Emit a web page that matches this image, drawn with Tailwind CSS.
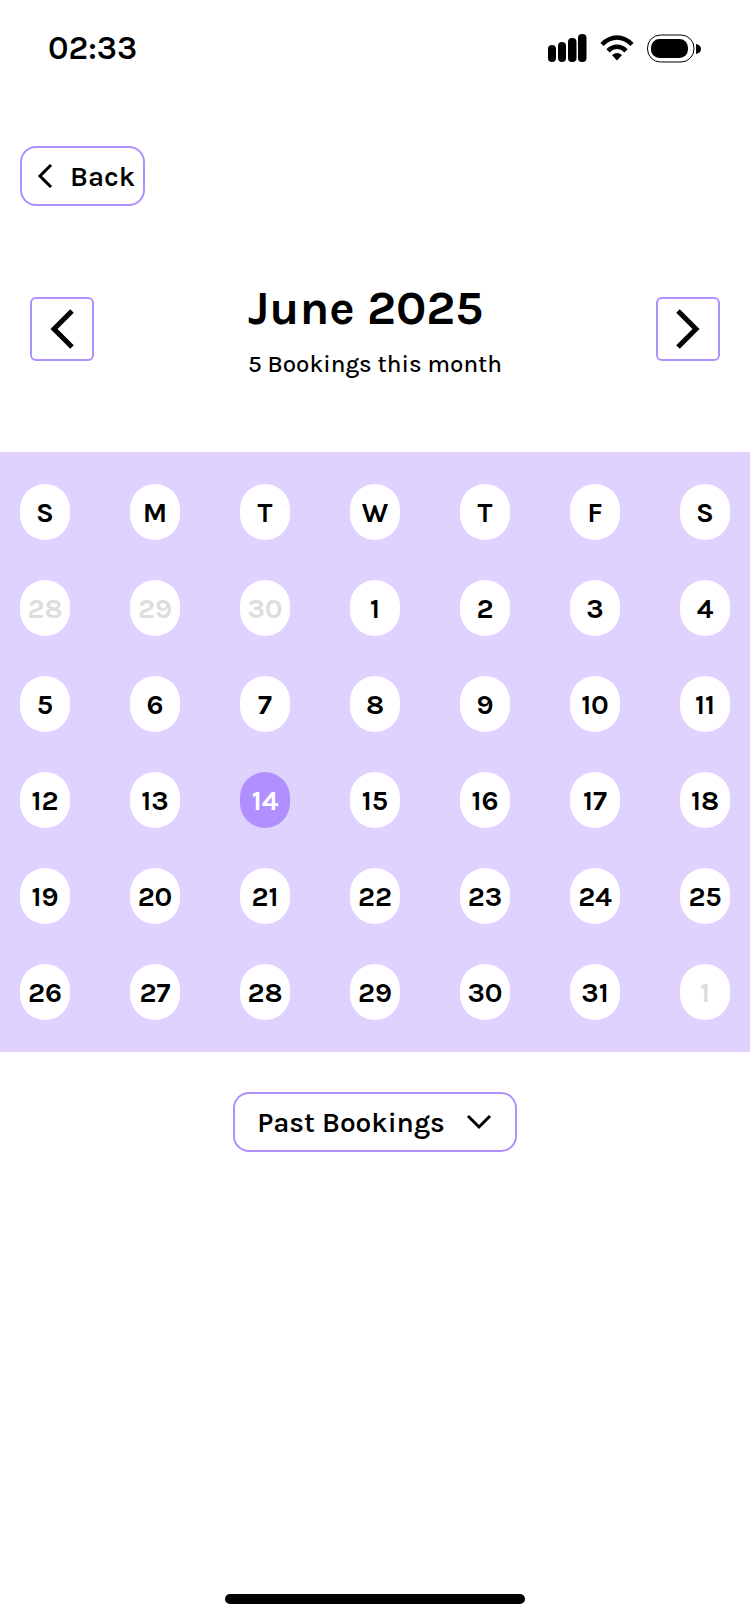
<!DOCTYPE html>
<html lang="en">
<head>
<meta charset="utf-8">
<meta name="viewport" content="width=device-width, initial-scale=1">
<title>Bookings calendar</title>
<script src="https://cdn.jsdelivr.net/npm/@tailwindcss/browser@4"></script>
</head>
<body class="flex min-h-screen flex-col bg-white font-['Karla','Inter',sans-serif] text-black">
  <div class="flex h-24 items-center justify-between pl-12 pr-12">
    <time class="text-[33px] leading-9 font-semibold">02:33</time>
    <svg class="h-8 w-[156px]" viewBox="546 32 156 32" role="img" aria-label="Signal, Wi-Fi and battery">
      <rect x="548" y="45" width="8" height="17" rx="4"/>
      <rect x="558" y="42" width="8" height="20" rx="4"/>
      <rect x="568" y="38" width="8.500" height="24" rx="4"/>
      <rect x="578" y="34" width="8.500" height="28" rx="4"/>
      <g fill="none" stroke="#000" stroke-width="4.500">
        <path d="M602 44.500Q609 37.500 617 37.500T632 44.500"/>
        <path d="M608 50.800Q612 46.800 617 46.800T626 50.800"/>
      </g>
      <path d="M612 55Q617 51 622 55L618 59.500Q617 61 616 59.500Z"/>
      <rect x="647.500" y="35" width="46.500" height="27" rx="13" fill="none" stroke="#000"/>
      <rect x="651" y="39" width="37" height="19" rx="8.500"/>
      <path d="M696 44Q701 45 701 49T696 54Z"/>
    </svg>
  </div>

  <nav class="mt-[50px] px-5">
    <button type="button" class="flex h-[60px] items-center gap-3 rounded-2xl border-2 border-[#b08fff] pl-3 pr-2 text-[28px] font-semibold">
      <svg class="size-6" viewBox="0 0 24 24" fill="none" stroke="currentColor" stroke-width="3" aria-hidden="true"><path d="M17 1L6 12L17 23"/></svg>
      <span class="pt-0.5">Back</span>
    </button>
  </nav>

  <header class="mt-[73px] flex items-center justify-between px-[30px]">
    <button type="button" aria-label="Previous month" class="flex size-16 items-center justify-center rounded-md border-2 border-[#b08fff]">
      <svg class="size-10" viewBox="0 0 40 40" fill="none" stroke="currentColor" stroke-width="5" aria-hidden="true"><path d="M30 2L12 20L30 38"/></svg>
    </button>
    <div>
      <h1 class="text-[48px] leading-[58px] font-bold">June 2025</h1>
      <p class="mt-3 text-[24px] leading-[30px] font-medium">5 Bookings this month</p>
    </div>
    <button type="button" aria-label="Next month" class="flex size-16 items-center justify-center rounded-md border-2 border-[#b08fff]">
      <svg class="size-10" viewBox="0 0 40 40" fill="none" stroke="currentColor" stroke-width="5" aria-hidden="true"><path d="M10 2L28 20L10 38"/></svg>
    </button>
  </header>

  <main class="mt-[73px] flex flex-col items-center">
    <table class="block w-full bg-[#dfd2ff] px-5 py-8 text-[28px] leading-8 font-bold" aria-label="June 2025">
      <thead class="block">
        <tr class="flex justify-between" id="weekdays"></tr>
      </thead>
      <tbody class="mt-10 flex flex-col gap-10" id="days"></tbody>
    </table>

    <button type="button" aria-expanded="false" class="mt-10 flex h-[60px] items-center gap-5 rounded-2xl border-2 border-[#b08fff] px-[22px] text-[28px] font-semibold">
      <span class="pt-0.5">Past Bookings</span>
      <svg class="size-7" viewBox="0 0 28 28" fill="none" stroke="currentColor" stroke-width="3" aria-hidden="true"><path d="M3 8L14 19L25 8"/></svg>
    </button>
  </main>

  <div class="mx-auto mt-auto mb-5 h-2.5 w-[300px] rounded-full bg-black"></div>

  <script>
    const weekdays = document.getElementById('weekdays');
    for (const name of ['S', 'M', 'T', 'W', 'T', 'F', 'S']) {
      weekdays.insertAdjacentHTML('beforeend',
        `<th scope="col" class="flex h-14 w-[50px] items-center justify-center rounded-full bg-white p-0 pt-0.5">${name}</th>`);
    }

    const normal = 'h-14 w-[50px] rounded-full bg-white pt-0.5';
    const muted = 'h-14 w-[50px] rounded-full bg-white pt-0.5 text-[#dddddd]';
    const selected = 'h-14 w-[50px] rounded-full bg-[#b08fff] pt-0.5 text-white';
    const days = [28, 29, 30, ...Array.from({ length: 31 }, (_, i) => i + 1), 1];
    const body = document.getElementById('days');
    for (let start = 0; start < days.length; start += 7) {
      const cells = days.slice(start, start + 7).map((day, i) => {
        const index = start + i;
        const outside = index < 3 || index > 33;
        const active = !outside && day === 14;
        const style = outside ? muted : active ? selected : normal;
        return `<td class="block p-0"><button type="button" class="${style}" aria-pressed="${active}">${day}</button></td>`;
      });
      body.insertAdjacentHTML('beforeend', `<tr class="flex justify-between">${cells.join('')}</tr>`);
    }
  </script>
</body>
</html>
